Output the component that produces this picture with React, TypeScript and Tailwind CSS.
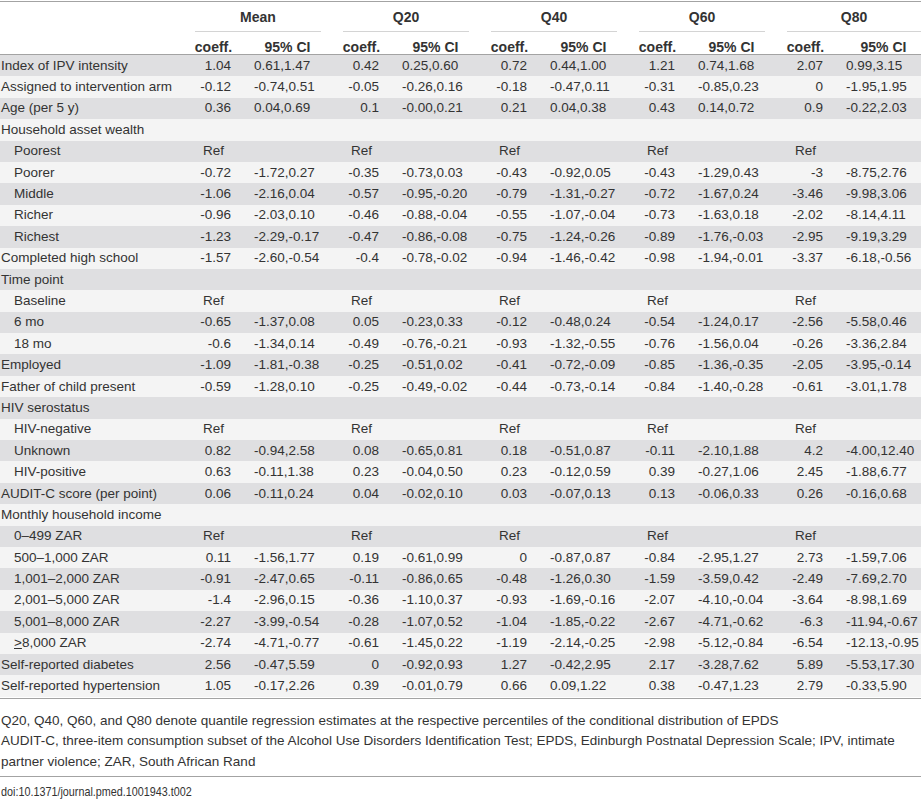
import React from "react";

type Row = { label: string; indent?: boolean; cells?: (string | null)[] };

const R = "Ref";
const rows: Row[] = [
  { label: "Index of IPV intensity", cells: ["1.04", "0.61,1.47", "0.42", "0.25,0.60", "0.72", "0.44,1.00", "1.21", "0.74,1.68", "2.07", "0.99,3.15"] },
  { label: "Assigned to intervention arm", cells: ["-0.12", "-0.74,0.51", "-0.05", "-0.26,0.16", "-0.18", "-0.47,0.11", "-0.31", "-0.85,0.23", "0", "-1.95,1.95"] },
  { label: "Age (per 5 y)", cells: ["0.36", "0.04,0.69", "0.1", "-0.00,0.21", "0.21", "0.04,0.38", "0.43", "0.14,0.72", "0.9", "-0.22,2.03"] },
  { label: "Household asset wealth" },
  { label: "Poorest", indent: true, cells: [R, null, R, null, R, null, R, null, R, null] },
  { label: "Poorer", indent: true, cells: ["-0.72", "-1.72,0.27", "-0.35", "-0.73,0.03", "-0.43", "-0.92,0.05", "-0.43", "-1.29,0.43", "-3", "-8.75,2.76"] },
  { label: "Middle", indent: true, cells: ["-1.06", "-2.16,0.04", "-0.57", "-0.95,-0.20", "-0.79", "-1.31,-0.27", "-0.72", "-1.67,0.24", "-3.46", "-9.98,3.06"] },
  { label: "Richer", indent: true, cells: ["-0.96", "-2.03,0.10", "-0.46", "-0.88,-0.04", "-0.55", "-1.07,-0.04", "-0.73", "-1.63,0.18", "-2.02", "-8.14,4.11"] },
  { label: "Richest", indent: true, cells: ["-1.23", "-2.29,-0.17", "-0.47", "-0.86,-0.08", "-0.75", "-1.24,-0.26", "-0.89", "-1.76,-0.03", "-2.95", "-9.19,3.29"] },
  { label: "Completed high school", cells: ["-1.57", "-2.60,-0.54", "-0.4", "-0.78,-0.02", "-0.94", "-1.46,-0.42", "-0.98", "-1.94,-0.01", "-3.37", "-6.18,-0.56"] },
  { label: "Time point" },
  { label: "Baseline", indent: true, cells: [R, null, R, null, R, null, R, null, R, null] },
  { label: "6 mo", indent: true, cells: ["-0.65", "-1.37,0.08", "0.05", "-0.23,0.33", "-0.12", "-0.48,0.24", "-0.54", "-1.24,0.17", "-2.56", "-5.58,0.46"] },
  { label: "18 mo", indent: true, cells: ["-0.6", "-1.34,0.14", "-0.49", "-0.76,-0.21", "-0.93", "-1.32,-0.55", "-0.76", "-1.56,0.04", "-0.26", "-3.36,2.84"] },
  { label: "Employed", cells: ["-1.09", "-1.81,-0.38", "-0.25", "-0.51,0.02", "-0.41", "-0.72,-0.09", "-0.85", "-1.36,-0.35", "-2.05", "-3.95,-0.14"] },
  { label: "Father of child present", cells: ["-0.59", "-1.28,0.10", "-0.25", "-0.49,-0.02", "-0.44", "-0.73,-0.14", "-0.84", "-1.40,-0.28", "-0.61", "-3.01,1.78"] },
  { label: "HIV serostatus" },
  { label: "HIV-negative", indent: true, cells: [R, null, R, null, R, null, R, null, R, null] },
  { label: "Unknown", indent: true, cells: ["0.82", "-0.94,2.58", "0.08", "-0.65,0.81", "0.18", "-0.51,0.87", "-0.11", "-2.10,1.88", "4.2", "-4.00,12.40"] },
  { label: "HIV-positive", indent: true, cells: ["0.63", "-0.11,1.38", "0.23", "-0.04,0.50", "0.23", "-0.12,0.59", "0.39", "-0.27,1.06", "2.45", "-1.88,6.77"] },
  { label: "AUDIT-C score (per point)", cells: ["0.06", "-0.11,0.24", "0.04", "-0.02,0.10", "0.03", "-0.07,0.13", "0.13", "-0.06,0.33", "0.26", "-0.16,0.68"] },
  { label: "Monthly household income" },
  { label: "0–499 ZAR", indent: true, cells: [R, null, R, null, R, null, R, null, R, null] },
  { label: "500–1,000 ZAR", indent: true, cells: ["0.11", "-1.56,1.77", "0.19", "-0.61,0.99", "0", "-0.87,0.87", "-0.84", "-2.95,1.27", "2.73", "-1.59,7.06"] },
  { label: "1,001–2,000 ZAR", indent: true, cells: ["-0.91", "-2.47,0.65", "-0.11", "-0.86,0.65", "-0.48", "-1.26,0.30", "-1.59", "-3.59,0.42", "-2.49", "-7.69,2.70"] },
  { label: "2,001–5,000 ZAR", indent: true, cells: ["-1.4", "-2.96,0.15", "-0.36", "-1.10,0.37", "-0.93", "-1.69,-0.16", "-2.07", "-4.10,-0.04", "-3.64", "-8.98,1.69"] },
  { label: "5,001–8,000 ZAR", indent: true, cells: ["-2.27", "-3.99,-0.54", "-0.28", "-1.07,0.52", "-1.04", "-1.85,-0.22", "-2.67", "-4.71,-0.62", "-6.3", "-11.94,-0.67"] },
  { label: "≥8,000 ZAR", indent: true, cells: ["-2.74", "-4.71,-0.77", "-0.61", "-1.45,0.22", "-1.19", "-2.14,-0.25", "-2.98", "-5.12,-0.84", "-6.54", "-12.13,-0.95"] },
  { label: "Self-reported diabetes", cells: ["2.56", "-0.47,5.59", "0", "-0.92,0.93", "1.27", "-0.42,2.95", "2.17", "-3.28,7.62", "5.89", "-5.53,17.30"] },
  { label: "Self-reported hypertension", cells: ["1.05", "-0.17,2.26", "0.39", "-0.01,0.79", "0.66", "0.09,1.22", "0.38", "-0.47,1.23", "2.79", "-0.33,5.90"] },
];

const GRID =
  "grid grid-cols-[173px_37px_67px_37px_67px_37px_67px_37px_67px_37px_1fr] gap-x-[22px]";

const groups = ["Mean", "Q20", "Q40", "Q60", "Q80"];

function Label({ row }: { row: Row }) {
  if (row.label.startsWith("≥")) {
    return (
      <span>
        <span className="underline decoration-1 underline-offset-[1px]">&gt;</span>
        {row.label.slice(1)}
      </span>
    );
  }
  return <span>{row.label}</span>;
}

export default function App() {
  return (
    <div
      className="w-[921px] h-[800px] bg-white text-[#333333] text-[13.5px] leading-[20px] overflow-hidden"
      style={{ fontFamily: '"Liberation Sans", Arial, sans-serif' }}
    >
      <div className="mt-px border-t border-[#a3a3a3]">
        {/* header row 1 */}
        <div className={`${GRID} h-[30px] bg-white font-bold text-[14px]`}>
          <div />
          {groups.map((g) => (
            <div
              key={g}
              className="col-span-2 flex items-center justify-center border-b border-[#d4d4d4]"
            >
              {g}
            </div>
          ))}
        </div>
        {/* header row 2 */}
        <div className={`${GRID} h-[23px] bg-white font-bold text-[14px] border-b border-[#a3a3a3]`}>
          <div />
          {groups.map((g) => (
            <React.Fragment key={g}>
              <div className="flex items-center justify-center pt-[5px] whitespace-nowrap">coeff.</div>
              <div className="flex items-center justify-center pt-[5px] whitespace-nowrap">95% CI</div>
            </React.Fragment>
          ))}
        </div>
        {/* data rows */}
        {rows.map((row, i) => (
          <div
            key={i}
            className={`${GRID} h-[21.4px] items-center ${i % 2 === 0 ? "bg-[#dfdfe1]" : "bg-[#f4f4f4]"}`}
          >
            <div className={`whitespace-nowrap ${row.indent ? "pl-[14px]" : "pl-px"}`}>
              <Label row={row} />
            </div>
            {row.cells
              ? row.cells.map((c, j) =>
                  j % 2 === 0 ? (
                    <div
                      key={j}
                      className={`whitespace-nowrap ${c === R ? "text-center" : "text-right pr-[1px]"}`}
                    >
                      {c}
                    </div>
                  ) : (
                    <div key={j} className="whitespace-nowrap">
                      {c}
                    </div>
                  )
                )
              : null}
          </div>
        ))}
      </div>
      <div className="border-t border-[#a3a3a3] mt-px pt-[12px] pb-[4px] leading-[20.5px] pl-px">
        <p>
          Q20, Q40, Q60, and Q80 denote quantile regression estimates at the respective percentiles of the
          conditional distribution of EPDS
        </p>
        <p>
          AUDIT-C, three-item consumption subset of the Alcohol Use Disorders Identification Test; EPDS,
          Edinburgh Postnatal Depression Scale; IPV, intimate partner violence; ZAR, South African Rand
        </p>
      </div>
      <div className="border-t border-[#a3a3a3] pt-[7px] pl-px text-[13px] leading-[16px]">
        <span className="inline-block origin-left scale-x-[0.83]">doi:10.1371/journal.pmed.1001943.t002</span>
      </div>
    </div>
  );
}
